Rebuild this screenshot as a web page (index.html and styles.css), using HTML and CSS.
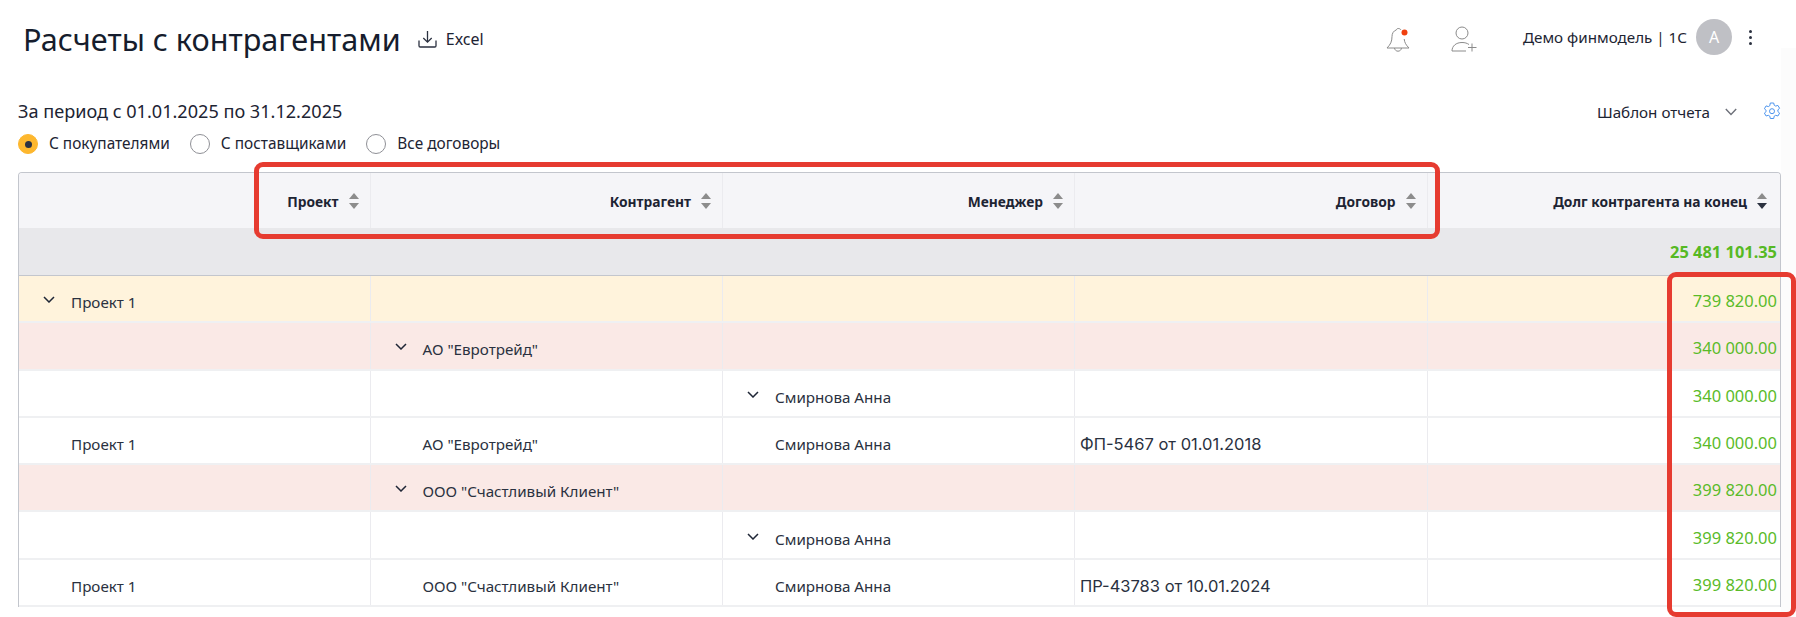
FILE: index.html
```html
<!DOCTYPE html>
<html lang="ru">
<head>
<meta charset="utf-8">
<title>Расчеты с контрагентами</title>
<link rel="stylesheet" href="styles.css">
</head>
<body>
<div class="page">
  <header class="topbar">
    <h1 class="title">Расчеты с контрагентами</h1>
    <a class="excel">
      <svg width="19" height="17" viewBox="0 0 19 17" fill="none" stroke="#2b3140" stroke-width="1.3"><path d="M9.500 0v11M5.300 7l4.200 4.200L13.700 7"/><path d="M1 9.500v5.300c0 .7.500 1.200 1.200 1.200h14.600c.7 0 1.200-.5 1.200-1.200V9.500"/></svg>
      <span>Excel</span>
    </a>
    <div class="spacer"></div>
    <svg class="ico-bell" width="25" height="25" viewBox="0 0 25 25" fill="none" stroke="#8b8b8b" stroke-width="1"><path d="M15 3c-.6-1-1.500-1.500-2.800-1.500-1 0-1.700.6-1.800 1.400C7.500 3.800 6 6.500 6 9.500c0 5-1.500 8-5 11.500h22c-3-3-4.500-5.500-4.800-9"/><path d="M8.500 21c.3 2 1.700 3.200 3.500 3.200s3.200-1.200 3.500-3.200"/><circle cx="18.500" cy="5.500" r="3" fill="#f0400f" stroke="none"/></svg>
    <svg class="ico-user" width="26" height="26" viewBox="0 0 26 26" fill="none" stroke="#8b8b8b" stroke-width="1"><circle cx="11" cy="7" r="6"/><path d="M1 25c0-5 4-8.500 10-8.500 3 0 5 .7 7 2"/><path d="M1 25h14M21 17.500v8M17 21.500h8.500"/></svg>
    <span class="account">Демо финмодель | 1С</span>
    <span class="avatar">А</span>
    <span class="dots"><i></i><i></i><i></i></span>
  </header>

  <section class="filters">
    <div>
      <div class="period">За период с 01.01.2025 по 31.12.2025</div>
      <div class="radios">
        <label class="radio radio-on"><span class="mark"></span>С покупателями</label>
        <label class="radio"><span class="mark"></span>С поставщиками</label>
        <label class="radio"><span class="mark"></span>Все договоры</label>
      </div>
    </div>
    <div class="template">
      <span>Шаблон отчета</span>
      <svg class="chev-grey" width="12" height="8" viewBox="0 0 12 8" fill="none" stroke="#6d7079" stroke-width="1.400"><path d="M.8 1l5.200 5.500L11.200 1"/></svg>
      <svg class="gear" width="18" height="18" viewBox="0 0 18 18" fill="none" stroke="#4c94ee" stroke-width="1"><path d="M7.300 1h3.400l.5 2.200 1.500.9 2.200-.7 1.700 2.900-1.700 1.500v1.800l1.700 1.500-1.700 2.900-2.200-.7-1.500.9-.5 2.300H7.300l-.5-2.300-1.500-.9-2.200.7-1.700-2.900 1.700-1.500V8.300L1.400 6.800l1.700-2.900 2.200.7 1.500-.9z" stroke-linejoin="round"/><circle cx="9" cy="9.200" r="2.500"/></svg>
    </div>
  </section>

  <div class="table">
    <div class="row head">
      <div class="hcell">Проект<svg class="sort" width="10" height="16" viewBox="0 0 10 16"><path d="M5 0l5 6H0z" fill="#8c8c8c"/><path d="M0 10h10l-5 6z" fill="#8c8c8c"/></svg></div>
      <div class="hcell">Контрагент<svg class="sort" width="10" height="16" viewBox="0 0 10 16"><path d="M5 0l5 6H0z" fill="#8c8c8c"/><path d="M0 10h10l-5 6z" fill="#8c8c8c"/></svg></div>
      <div class="hcell">Менеджер<svg class="sort" width="10" height="16" viewBox="0 0 10 16"><path d="M5 0l5 6H0z" fill="#8c8c8c"/><path d="M0 10h10l-5 6z" fill="#8c8c8c"/></svg></div>
      <div class="hcell">Договор<svg class="sort" width="10" height="16" viewBox="0 0 10 16"><path d="M5 0l5 6H0z" fill="#8c8c8c"/><path d="M0 10h10l-5 6z" fill="#8c8c8c"/></svg></div>
      <div class="hcell hcell-last">Долг контрагента на конец<svg class="sort" width="10" height="16" viewBox="0 0 10 16"><path d="M5 0l5 6H0z" fill="#8c8c8c"/><path d="M0 10h10l-5 6z" fill="#2b3140"/></svg></div>
    </div>
    <div class="total"><span class="total-sum">25 481 101.35</span></div>

    <div class="row body-row yellow">
      <div class="cell"><svg class="chev" width="12" height="7" viewBox="0 0 12 7" fill="none" stroke="#1f2636" stroke-width="1.500"><path d="M1 1l5 5 5-5"/></svg>Проект 1</div>
      <div class="cell"></div><div class="cell"></div><div class="cell"></div>
      <div class="cell sum">739 820.00</div>
    </div>
    <div class="row body-row pink">
      <div class="cell"></div>
      <div class="cell"><svg class="chev" width="12" height="7" viewBox="0 0 12 7" fill="none" stroke="#1f2636" stroke-width="1.500"><path d="M1 1l5 5 5-5"/></svg>АО "Евротрейд"</div>
      <div class="cell"></div><div class="cell"></div>
      <div class="cell sum">340 000.00</div>
    </div>
    <div class="row body-row">
      <div class="cell"></div><div class="cell"></div>
      <div class="cell"><svg class="chev" width="12" height="7" viewBox="0 0 12 7" fill="none" stroke="#1f2636" stroke-width="1.500"><path d="M1 1l5 5 5-5"/></svg>Смирнова Анна</div>
      <div class="cell"></div>
      <div class="cell sum">340 000.00</div>
    </div>
    <div class="row body-row">
      <div class="cell leaf">Проект 1</div>
      <div class="cell leaf">АО "Евротрейд"</div>
      <div class="cell leaf">Смирнова Анна</div>
      <div class="cell contract">ФП-5467 от 01.01.2018</div>
      <div class="cell sum">340 000.00</div>
    </div>
    <div class="row body-row pink">
      <div class="cell"></div>
      <div class="cell"><svg class="chev" width="12" height="7" viewBox="0 0 12 7" fill="none" stroke="#1f2636" stroke-width="1.500"><path d="M1 1l5 5 5-5"/></svg>ООО "Счастливый Клиент"</div>
      <div class="cell"></div><div class="cell"></div>
      <div class="cell sum">399 820.00</div>
    </div>
    <div class="row body-row">
      <div class="cell"></div><div class="cell"></div>
      <div class="cell"><svg class="chev" width="12" height="7" viewBox="0 0 12 7" fill="none" stroke="#1f2636" stroke-width="1.500"><path d="M1 1l5 5 5-5"/></svg>Смирнова Анна</div>
      <div class="cell"></div>
      <div class="cell sum">399 820.00</div>
    </div>
    <div class="row body-row">
      <div class="cell leaf">Проект 1</div>
      <div class="cell leaf">ООО "Счастливый Клиент"</div>
      <div class="cell leaf">Смирнова Анна</div>
      <div class="cell contract">ПР-43783 от 10.01.2024</div>
      <div class="cell sum">399 820.00</div>
    </div>
  </div>
</div>
<div class="scroll-strip"></div>
<div class="mark-box box-head"></div>
<div class="mark-box box-sums"></div>
</body>
</html>
```
FILE: styles.css
```css
* { box-sizing: border-box; }
html, body { margin: 0; height: 100%; overflow: hidden; background: #fff; }
body { font-family: "Noto Sans", "Liberation Sans", sans-serif; color: #1d2433; font-size: 15px; }
.page { width: 1796px; }

.topbar { display: flex; align-items: center; height: 74px; padding: 0 0 0 23px; }
.title { margin: 4px 0 0; font-size: 30.6px; font-weight: 400; line-height: 38px; color: #161d2d; }
.excel { display: flex; align-items: center; gap: 9px; margin: 4px 0 0 17px; font-size: 16px; }
.spacer { flex: 1; }
.ico-bell { margin-right: 40px; margin-top: 5px; }
.ico-user { margin-right: 46px; margin-top: 4px; }
.account { font-size: 15.2px; margin-right: 9px; }
.avatar { width: 36px; height: 36px; border-radius: 50%; background: #bfc0c5; color: #fff; display: flex; align-items: center; justify-content: center; font-size: 16px; margin-right: 17px; }
.dots { display: flex; flex-direction: column; gap: 3px; margin-right: 44px; }
.dots i { width: 3px; height: 3px; border-radius: 50%; background: #2b3140; display: block; }

.filters { display: flex; justify-content: space-between; align-items: flex-start; height: 98px; padding: 27px 15px 0 18px; }
.period { font-size: 18.1px; line-height: 20px; }
.radios { display: flex; gap: 20px; margin-top: 13px; }
.radio { display: flex; align-items: center; gap: 11px; font-size: 15.4px; line-height: 20px; }
.mark { width: 20px; height: 20px; border-radius: 50%; border: 1px solid #8f9096; background: #fff; display: flex; align-items: center; justify-content: center; }
.radio-on .mark { background: #fdb72e; border-color: #fdb72e; }
.radio-on .mark::after { content: ""; width: 7px; height: 7px; border-radius: 50%; background: #2b3142; }
.template { display: flex; align-items: center; font-size: 15.2px; line-height: 20px; margin-top: 1px; }
.chev-grey { margin: 0 26px 0 15px; }
.gear { margin-top: -2px; }

.table { width: 1763px; margin-left: 18px; border-left: 1px solid #c3c6cd; border-right: 1px solid #c3c6cd; border-top: 1px solid #c3c6cd; border-radius: 4px 4px 0 0; }
.row { display: grid; grid-template-columns: 351.500px 352.500px 352px 352.500px 1fr; }
.head { height: 55px; background: #f5f5f8; border-radius: 3px 3px 0 0; }
.hcell { display: flex; align-items: center; justify-content: flex-end; gap: 10px; padding-right: 11px; padding-top: 1px; font-weight: 700; font-size: 13.800px; border-right: 1px solid #ebebef; }
.hcell-last { border-right: 0; padding-right: 13px; }
.total { height: 48px; background: #e8e8eb; border-bottom: 1px solid #c3c6cd; display: flex; align-items: center; justify-content: flex-end; padding: 0 3px 0 0; }
.total-sum { color: #56b924; font-weight: 700; font-size: 16.400px; }

.body-row { height: 47.3px; border-bottom: 2px solid #eff0f2; }
.yellow { background: #fff3dc; }
.pink { background: #fae9e6; }
.cell { display: flex; align-items: center; padding: 7px 0 0 24px; border-right: 1px solid #ebebef; font-size: 15.200px; color: #2a3140; }
.cell:last-child { border-right: 0; }
.chev { margin: -5px 16px 0 0; flex: none; }
.leaf { padding-left: 52px; }
.contract { font-family: "Inter", "Noto Sans", sans-serif; font-size: 16.500px; padding-left: 5px; }
.sum { justify-content: flex-end; padding: 4px 3px 0 0; color: #5abb29; font-size: 16.500px; }

.scroll-strip { position: absolute; left: 1781px; top: 48px; width: 15px; bottom: 0; background: #fcfcfc; }
.mark-box { position: absolute; border: 5px solid #e63b30; border-radius: 9px; }
.box-head { left: 254px; top: 162px; width: 1186px; height: 77px; }
.box-sums { left: 1667px; top: 272px; width: 129px; height: 345px; }
```
